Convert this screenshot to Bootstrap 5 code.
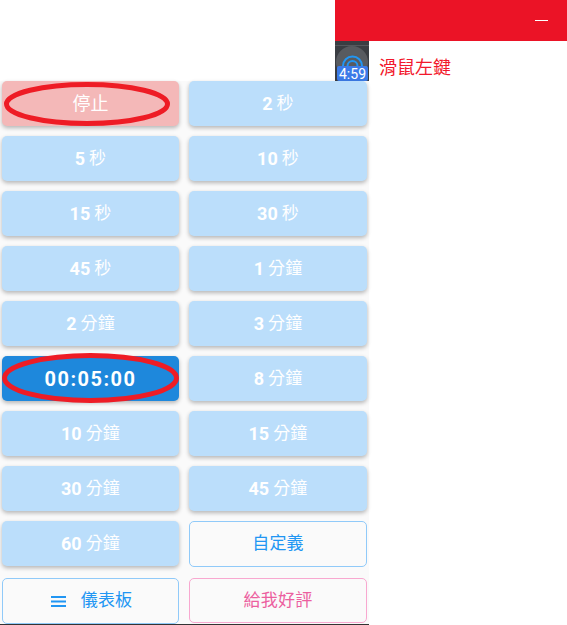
<!DOCTYPE html>
<html lang="zh-Hant">
<head>
<meta charset="utf-8">
<title>滑鼠左鍵</title>
<link href="https://cdn.jsdelivr.net/npm/bootstrap@5.3.0/dist/css/bootstrap.min.css" rel="stylesheet">
<style>
html,body{height:625px;overflow:hidden;background:#fff;}
body{font-family:Roboto,"Noto Sans CJK TC",sans-serif;}
.topbar{height:41px;width:232px;margin-left:335px;background:#eb1326;}
.minus-line{width:13px;height:1px;background:#fff;margin-right:19px;}
.infobar{height:40px;padding-left:335px;}
.thumb{width:34px;height:40px;flex:none;display:block;}
.infotext{color:#f2182c;font-size:18px;font-weight:400;margin-left:10px;line-height:1;margin-top:14px;}
.panel{width:369px;height:544px;background:#fafafa;border-bottom:1px solid #333;padding:0 2px;}
.timer-grid{display:grid;grid-template-columns:177px 178px;column-gap:10px;row-gap:10px;grid-auto-rows:45px;}
.tbtn{position:relative;display:flex;align-items:center;justify-content:center;height:45px;padding:0;border:0;border-radius:5px;background:#bbdefb;color:#fff;font-size:18px;font-weight:700;box-shadow:0 2px 4px rgba(0,0,0,.28);}
.tbtn .unit{font-weight:400;margin-left:4px;font-size:17px;letter-spacing:.2px;}
.tbtn.stop{background:#f4b8b8;font-weight:400;font-size:18px;}
.tbtn.active-time{background:#1e88dc;font-size:20px;font-weight:700;letter-spacing:1.5px;}
.tbtn.outline-blue,.tbtn.outline-pink{background:#fafafa;box-shadow:none;font-weight:400;font-size:17px;letter-spacing:.2px;}
.tbtn.outline-blue{border:1px solid #90caf9;color:#2196f3;height:46px;}
.tbtn.outline-pink{border:1px solid #f8a8d0;color:#ec5f9f;}
.foot-row{margin-top:2px;}
.with-ico{padding-left:2px;}
.ring{position:absolute;pointer-events:none;overflow:visible;}
.ring-stop{left:2px;top:1px;width:166px;height:44px;}
.ring-time{left:0;top:-4px;width:177px;height:52px;}
.menu-ico{width:15px;height:11px;margin-right:15px;}
</style>
</head>
<body>
<div class="topbar d-flex align-items-center justify-content-end"><div class="minus-line"></div></div>
<div class="infobar d-flex align-items-center">
  <svg class="thumb" viewBox="0 0 34 40" role="img" aria-label="計時圖示">
    <rect width="34" height="40" fill="#3a3d42"/>
    <rect y="4" width="34" height="1" fill="#55585c"/>
    <circle cx="17" cy="21" r="16" fill="#585b60"/>
    <path d="M8 25a9.500 9.500 0 0 1 19 0M12.500 25a5 5 0 0 1 10 0" fill="none" stroke="#2196f3" stroke-width="2"/>
    <rect x="2" y="25" width="31" height="15" rx="2" fill="#3c7be8"/>
    <text x="17.500" y="37.500" text-anchor="middle" fill="#fff" font-family="Roboto,sans-serif" font-size="14">4:59</text>
  </svg>
  <span class="infotext">滑鼠左鍵</span>
</div>
<div class="panel">
  <div class="timer-grid">
    <button class="tbtn stop" type="button">停止
      <svg class="ring ring-stop" viewBox="0 0 166 44"><ellipse cx="83" cy="22" rx="80.500" ry="19.500" fill="none" stroke="#ee1c25" stroke-width="5"/></svg>
    </button>
    <button class="tbtn" type="button">2<span class="unit">秒</span></button>
    <button class="tbtn" type="button">5<span class="unit">秒</span></button>
    <button class="tbtn" type="button">10<span class="unit">秒</span></button>
    <button class="tbtn" type="button">15<span class="unit">秒</span></button>
    <button class="tbtn" type="button">30<span class="unit">秒</span></button>
    <button class="tbtn" type="button">45<span class="unit">秒</span></button>
    <button class="tbtn" type="button">1<span class="unit">分鐘</span></button>
    <button class="tbtn" type="button">2<span class="unit">分鐘</span></button>
    <button class="tbtn" type="button">3<span class="unit">分鐘</span></button>
    <button class="tbtn active-time" type="button">00:05:00
      <svg class="ring ring-time" viewBox="0 0 177 52"><ellipse cx="88.500" cy="26" rx="86" ry="22.500" fill="none" stroke="#ee1c25" stroke-width="5"/></svg>
    </button>
    <button class="tbtn" type="button">8<span class="unit">分鐘</span></button>
    <button class="tbtn" type="button">10<span class="unit">分鐘</span></button>
    <button class="tbtn" type="button">15<span class="unit">分鐘</span></button>
    <button class="tbtn" type="button">30<span class="unit">分鐘</span></button>
    <button class="tbtn" type="button">45<span class="unit">分鐘</span></button>
    <button class="tbtn" type="button">60<span class="unit">分鐘</span></button>
    <button class="tbtn outline-blue" type="button">自定義</button>
    <button class="tbtn outline-blue foot-row with-ico" type="button">
      <svg class="menu-ico" viewBox="0 0 15 11"><path d="M0 1h15M0 5.500h15M0 10h15" stroke="#2196f3" stroke-width="2"/></svg>儀表板</button>
    <button class="tbtn outline-pink foot-row" type="button">給我好評</button>
  </div>
</div>
<script src="https://cdn.jsdelivr.net/npm/bootstrap@5.3.0/dist/js/bootstrap.bundle.min.js"></script>
</body>
</html>
